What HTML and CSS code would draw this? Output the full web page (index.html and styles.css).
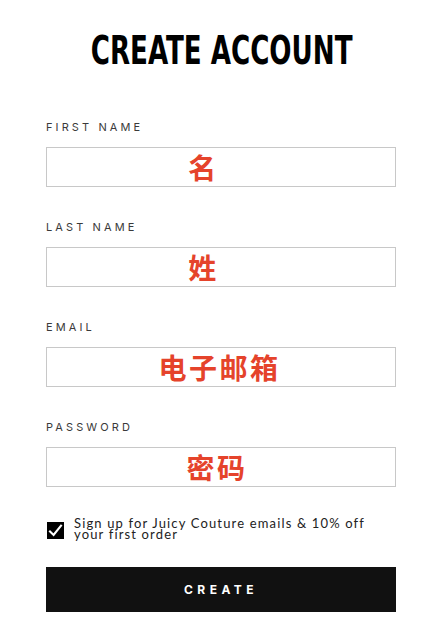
FILE: index.html
```html
<!DOCTYPE html>
<html lang="en">
<head>
<meta charset="utf-8">
<title>Create Account</title>
<link rel="stylesheet" href="styles.css">
</head>
<body>
<main class="page">
  <h1 class="title"><span class="title-text">CREATE ACCOUNT</span></h1>
  <form class="form">
    <div class="field">
      <label class="label">FIRST NAME</label>
      <div class="input"><span class="ph ph-name">名</span></div>
    </div>
    <div class="field">
      <label class="label">LAST NAME</label>
      <div class="input"><span class="ph ph-name">姓</span></div>
    </div>
    <div class="field">
      <label class="label">EMAIL</label>
      <div class="input"><span class="ph ph-email">电子邮箱</span></div>
    </div>
    <div class="field">
      <label class="label">PASSWORD</label>
      <div class="input"><span class="ph ph-pass">密码</span></div>
    </div>
    <div class="consent">
      <span class="box">
        <svg viewBox="0 0 17 17" width="17" height="17"><path d="M3 9.4 L6.6 13 L14 3.6" fill="none" stroke="#fff" stroke-width="2.1" stroke-linecap="square"/></svg>
      </span>
      <span class="consent-text">Sign up for Juicy Couture emails &amp; 10% off your first order</span>
    </div>
    <div class="button">CREATE</div>
  </form>
</main>
</body>
</html>
```

FILE: styles.css
```css
html, body {
  margin: 0;
  padding: 0;
  background: #fff;
}
.page {
  width: 350px;
  margin-left: 46px;
  padding-top: 26px;
  font-family: "Inter", "DejaVu Sans", sans-serif;
  color: #222;
}
.title {
  margin: 0;
  height: 50px;
  line-height: 50px;
  text-align: center;
  white-space: nowrap;
  font-family: "DejaVu Sans Condensed", "Liberation Sans", sans-serif;
  font-weight: 700;
  font-size: 39px;
  color: #000;
}
.title-text {
  display: inline-block;
  transform: scaleX(0.745);
}
.form {
  display: flex;
  flex-direction: column;
  margin-top: 43px;
}
.field {
  display: flex;
  flex-direction: column;
  gap: 12px;
  margin-bottom: 32px;
}
.label {
  font-size: 11px;
  line-height: 16px;
  letter-spacing: 3.1px;
  color: #3a3a3a;
}
.input {
  box-sizing: border-box;
  height: 40px;
  border: 1px solid #c8c8c8;
  display: flex;
  align-items: center;
  justify-content: center;
}
.ph {
  font-family: "Noto Sans CJK SC", sans-serif;
  font-weight: 700;
  font-size: 28px;
  line-height: 1;
  color: #e5432b;
  letter-spacing: 2.5px;
}
.ph-name {
  margin-right: 35px;
}
.ph-email {
  margin-right: 3px;
}
.ph-pass {
  margin-right: 8px;
}
.consent {
  display: flex;
  align-items: flex-start;
  gap: 10px;
  margin-top: -1px;
}
.box {
  flex: none;
  width: 17px;
  height: 17px;
  margin-top: 4px;
  margin-left: 1px;
  background: #000;
  display: block;
}
.box svg {
  display: block;
}
.consent-text {
  font-family: "Lato", "DejaVu Sans", sans-serif;
  font-size: 13px;
  line-height: 10.7px;
  letter-spacing: 1.15px;
  color: #222;
  padding-right: 20px;
}
.button {
  margin-top: 27.5px;
  height: 45px;
  background: #111;
  color: #fff;
  display: flex;
  align-items: center;
  justify-content: center;
  font-weight: 700;
  font-size: 12px;
  letter-spacing: 4.5px;
}
```
